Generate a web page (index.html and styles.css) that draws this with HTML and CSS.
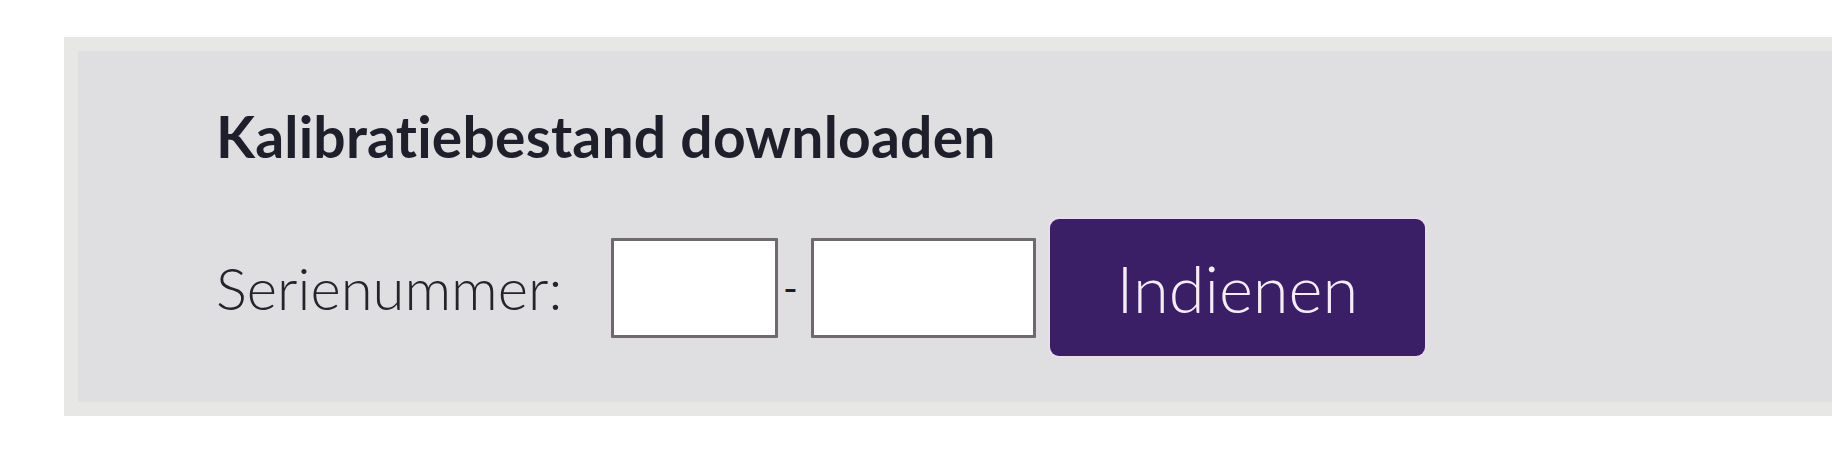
FILE: index.html
```html
<!DOCTYPE html>
<html lang="nl">
<head>
  <meta charset="UTF-8">
  <meta name="viewport" content="width=device-width, initial-scale=1.0">
  <title>Kalibratiebestand downloaden</title>
  <link rel="stylesheet" href="styles.css">
</head>
<body>
  <div class="panel">
    <h2>Kalibratiebestand downloaden</h2>
    <form class="serial-form">
      <label for="serie1">Serienummer:</label>
      <input type="text" id="serie1" class="serie-a">
      <span class="dash">-</span>
      <input type="text" id="serie2" class="serie-b">
      <button type="button">Indienen</button>
    </form>
  </div>
</body>
</html>
```

FILE: styles.css
```css
body {
  margin: 0;
  background: #fff;
  font-family: Lato, 'Open Sans', sans-serif;
  font-variant-ligatures: none;
}
.panel {
  margin: 37px 0 0 64px;
  border: 14px solid #e7e7e5;
  border-right: none;
  background: #dfdfe1;
  padding: 53px 0 46px 138px;
}
.panel h2 {
  margin: 0;
  font-size: 57px;
  font-weight: 700;
  line-height: 65px;
  letter-spacing: 0.2px;
  color: #1f1f2c;
}
.serial-form {
  display: flex;
  align-items: center;
  margin-top: 50px;
}
label {
  width: 395px;
  font-size: 58px;
  font-weight: 300;
  color: #24242a;
}
input[type="text"] {
  box-sizing: border-box;
  height: 100px;
  border: 3px solid #6d696f;
  border-radius: 1px;
  background: #fff;
  margin: 0;
  padding: 0 8px;
}
.serie-a {
  width: 167px;
}
.serie-b {
  width: 225px;
}
.dash {
  font-size: 40px;
  font-weight: 400;
  color: #1d1d28;
  padding: 0 13px 0 5px;
}
.serial-form button {
  box-sizing: border-box;
  width: 375px;
  height: 137px;
  margin-left: 14px;
  border: none;
  border-radius: 9px;
  background: #3a1e66;
  box-shadow: 0 0 0 2px #e9dcee;
  color: #f6ecf6;
  font-family: Lato, sans-serif;
  font-size: 65px;
  font-weight: 300;
  font-variant-ligatures: none;
  cursor: pointer;
}
```
